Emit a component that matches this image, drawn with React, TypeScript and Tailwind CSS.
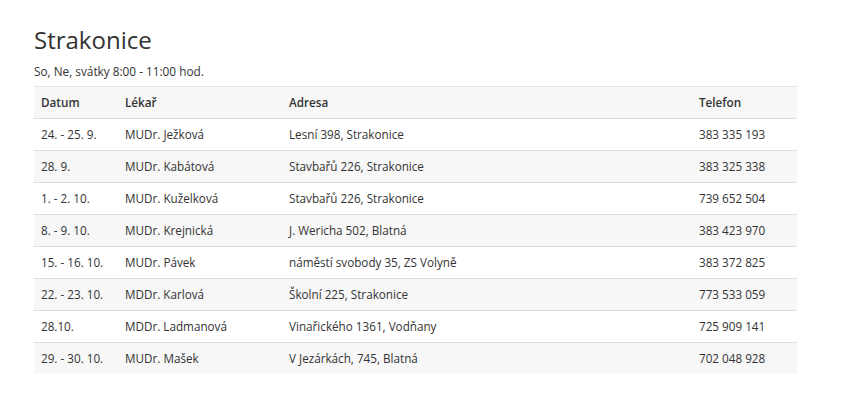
const rows = [
  ['24. - 25. 9.', 'MUDr. Ježková', 'Lesní 398, Strakonice', '383 335 193'],
  ['28. 9.', 'MUDr. Kabátová', 'Stavbařů 226, Strakonice', '383 325 338'],
  ['1. - 2. 10.', 'MUDr. Kuželková', 'Stavbařů 226, Strakonice', '739 652 504'],
  ['8. - 9. 10.', 'MUDr. Krejnická', 'J. Wericha 502, Blatná', '383 423 970'],
  ['15. - 16. 10.', 'MUDr. Pávek', 'náměstí svobody 35, ZS Volyně', '383 372 825'],
  ['22. - 23. 10.', 'MDDr. Karlová', 'Školní 225, Strakonice', '773 533 059'],
  ['28.10.', 'MDDr. Ladmanová', 'Vinařického 1361, Vodňany', '725 909 141'],
  ['29. - 30. 10.', 'MUDr. Mašek', 'V Jezárkách, 745, Blatná', '702 048 928'],
];

export default function App() {
  return (
    <div className="min-h-screen bg-white pl-[34px] pt-[25px] text-[#333] [font-family:'Open_Sans',sans-serif]">
      <h1 className="text-[24px] leading-[30px] font-normal">Strakonice</h1>
      <p className="mt-[7px] text-[11.8px] leading-[18px]">So, Ne, svátky 8:00 - 11:00 hod.</p>
      <table className="mt-[6px] w-[763px] border-collapse text-[11.7px] leading-[17px]">
        <thead>
          <tr className="bg-[#f7f7f7]">
            <th className="w-[84px] border-t border-[#e5e5e5] px-[7px] py-[7px] text-left font-semibold">Datum</th>
            <th className="w-[164px] border-t border-[#e5e5e5] px-[7px] py-[7px] text-left font-semibold">Lékař</th>
            <th className="w-[410px] border-t border-[#e5e5e5] px-[7px] py-[7px] text-left font-semibold">Adresa</th>
            <th className="border-t border-[#e5e5e5] px-[7px] py-[7px] text-left font-semibold">Telefon</th>
          </tr>
        </thead>
        <tbody>
          {rows.map((r, i) => (
            <tr key={i} className={i % 2 === 1 ? 'bg-[#f7f7f7]' : 'bg-white'}>
              {r.map((c, j) => (
                <td key={j} className="border-t border-[#dddddd] px-[7px] py-[7px]">{c}</td>
              ))}
            </tr>
          ))}
        </tbody>
      </table>
    </div>
  );
}
